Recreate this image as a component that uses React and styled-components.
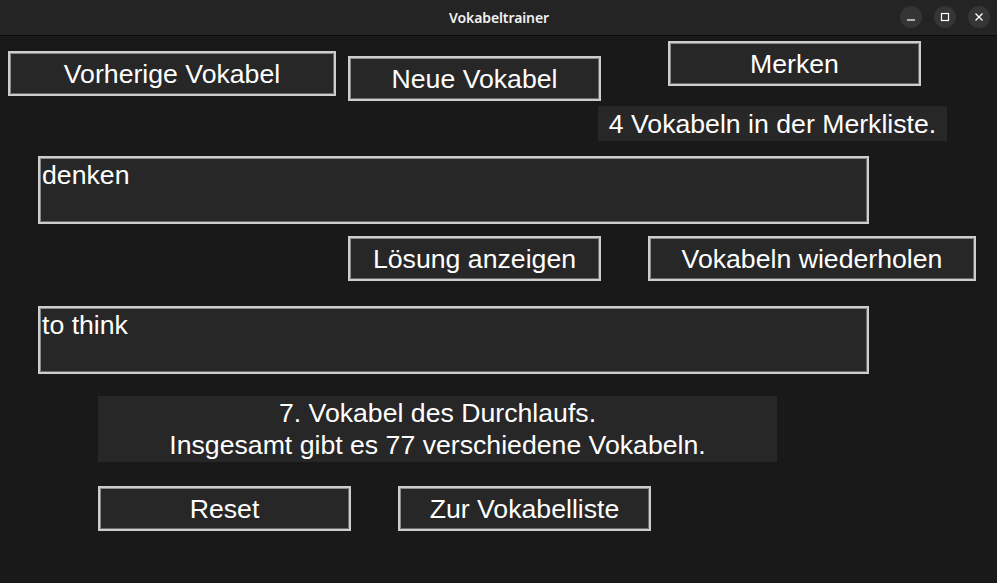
import React from "react";
import styled, { createGlobalStyle } from "styled-components";

const GlobalStyle = createGlobalStyle`
  html, body {
    margin: 0;
    padding: 0;
    background: #191919;
  }
  body {
    font-family: "Liberation Sans", Arial, sans-serif;
  }
`;

const Window = styled.div`
  width: 997px;
  height: 583px;
  display: flex;
  flex-direction: column;
  background: #191919;
  overflow: hidden;
`;

const TitleBar = styled.div`
  height: 35px;
  flex: none;
  display: flex;
  align-items: center;
  justify-content: center;
  position: relative;
  background: #242424;
  border-bottom: 1px solid #0b0b0b;
`;

const Title = styled.div`
  font-family: "Noto Sans", "DejaVu Sans", sans-serif;
  font-weight: 600;
  font-size: 14px;
  color: #f2f2f2;
  letter-spacing: -0.1px;
  margin-left: 1px;
`;

const Controls = styled.div`
  position: absolute;
  right: 7px;
  top: 6px;
  display: flex;
  gap: 12px;
`;

const CtrlButton = styled.div`
  width: 22px;
  height: 22px;
  border-radius: 50%;
  background: #353535;
  display: flex;
  align-items: center;
  justify-content: center;
`;

const Content = styled.div`
  display: flex;
  flex-direction: column;
  padding-top: 5px;
`;

const Row = styled.div`
  display: flex;
  align-items: flex-start;
  margin-top: ${(p) => p.$top || 0}px;
`;

const Button = styled.div`
  box-sizing: border-box;
  width: ${(p) => p.$w}px;
  height: 45px;
  margin-left: ${(p) => p.$left || 0}px;
  margin-top: ${(p) => p.$top || 0}px;
  display: flex;
  align-items: center;
  justify-content: center;
  background: #272727;
  border: 2px solid #cdcdcd;
  box-shadow: inset -1px -1px 0 #6b6b6b, inset 1px 1px 0 #8a8a8a;
  color: #ffffff;
  font-size: 26.67px;
  padding-top: 1px;
  white-space: nowrap;
`;

const Label = styled.div`
  box-sizing: border-box;
  width: ${(p) => p.$w}px;
  height: ${(p) => p.$h}px;
  margin-left: ${(p) => p.$left || 0}px;
  margin-top: ${(p) => p.$top || 0}px;
  display: flex;
  flex-direction: column;
  align-items: center;
  justify-content: center;
  background: #272727;
  color: #ffffff;
  font-size: 26.67px;
  line-height: 32px;
  text-align: center;
  white-space: nowrap;
`;

const Entry = styled.div`
  box-sizing: border-box;
  width: 831px;
  height: 68px;
  margin-left: 38px;
  margin-top: ${(p) => p.$top || 0}px;
  background: #272727;
  border: 2px solid #cdcdcd;
  box-shadow: inset -1px -1px 0 #6b6b6b, inset 1px 1px 0 #8a8a8a;
  color: #ffffff;
  font-size: 26.67px;
  line-height: 31px;
  padding: 2px 2px;
`;

export default function App() {
  return (
    <>
      <GlobalStyle />
      <Window>
        <TitleBar>
          <Title>Vokabeltrainer</Title>
          <Controls>
            <CtrlButton>
              <svg width="10" height="10" viewBox="0 0 10 10">
                <line x1="1" y1="8" x2="9" y2="8" stroke="#fff" strokeWidth="1.2" />
              </svg>
            </CtrlButton>
            <CtrlButton>
              <svg width="10" height="10" viewBox="0 0 10 10">
                <rect x="1.5" y="1.5" width="7" height="7" fill="none" stroke="#fff" strokeWidth="1.2" />
              </svg>
            </CtrlButton>
            <CtrlButton>
              <svg width="10" height="10" viewBox="0 0 10 10">
                <path d="M1.5 1.5 L8.5 8.5 M8.5 1.5 L1.5 8.5" stroke="#fff" strokeWidth="1.3" />
              </svg>
            </CtrlButton>
          </Controls>
        </TitleBar>
        <Content>
          <Row>
            <Button $w={328} $left={8} $top={10}>Vorherige Vokabel</Button>
            <Button $w={253} $left={12} $top={15}>Neue Vokabel</Button>
            <Button $w={253} $left={67}>Merken</Button>
          </Row>
          <Row $top={5}>
            <Label $w={349} $h={35} $left={598}>4 Vokabeln in der Merkliste.</Label>
          </Row>
          <Entry $top={15}>denken</Entry>
          <Row $top={12}>
            <Button $w={253} $left={348}>Lösung anzeigen</Button>
            <Button $w={328} $left={47}>Vokabeln wiederholen</Button>
          </Row>
          <Entry $top={25}>to think</Entry>
          <Row $top={22}>
            <Label $w={679} $h={66} $left={98}>
              <div>7. Vokabel des Durchlaufs.</div>
              <div>Insgesamt gibt es 77 verschiedene Vokabeln.</div>
            </Label>
          </Row>
          <Row $top={24}>
            <Button $w={253} $left={98}>Reset</Button>
            <Button $w={253} $left={47}>Zur Vokabelliste</Button>
          </Row>
        </Content>
      </Window>
    </>
  );
}
